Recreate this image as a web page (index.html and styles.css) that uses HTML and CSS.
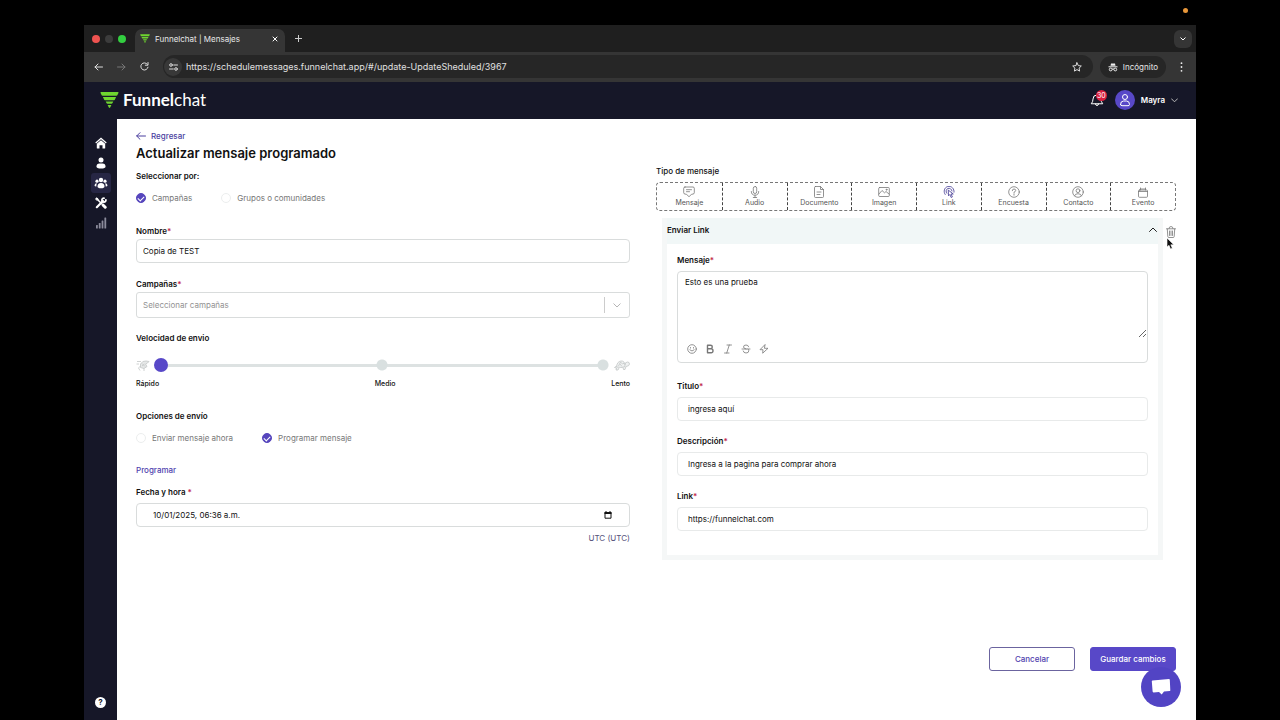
FILE: index.html
```html
<!DOCTYPE html>
<html lang="es">
<head>
<meta charset="utf-8">
<meta name="viewport" content="width=device-width, initial-scale=1">
<title>Funnelchat | Mensajes</title>
<link rel="stylesheet" href="styles.css">
</head>
<body>
<span class="rec-dot"></span>
<div class="browser">
  <div class="tabstrip">
    <div class="lights"><i class="light red"></i><i class="light dim"></i><i class="light green"></i></div>
    <div class="tab">
      <svg width="10" height="9" viewBox="0 0 20 17" fill="#6fd62f"><path d="M1 0h18q1 0 .5 1L18 4H2L.5 1Q0 0 1 0zM3 5.500h14l-1.500 3h-11zM6 10h8l-1.300 2.500H7.300zM8 14h4l-1.500 3h-1z"/></svg>
      <span class="tab-title">Funnelchat | Mensajes</span>
      <button class="plain" aria-label="Cerrar pestaña"><svg width="6" height="6" viewBox="0 0 6 6" class="ln" stroke="#fff"><path d="M1 1l4 4M5 1L1 5"/></svg></button>
    </div>
    <button class="plain newtab" aria-label="Nueva pestaña"><svg width="7" height="7" viewBox="0 0 7 7" class="ln" stroke="#ccc"><path d="M3.500 0v7M0 3.500h7"/></svg></button>
    <button class="tabs-menu" aria-label="Buscar pestañas"><svg width="6" height="4" viewBox="0 0 6 4" class="ln" stroke="#fff"><path d="M.8.800L3 3 5.200.800"/></svg></button>
  </div>
  <div class="toolbar">
    <button class="plain" aria-label="Atrás"><svg width="9" height="8" viewBox="0 0 9 8" class="ln" stroke="#ddd"><path d="M8.500 4H1M4 1L1 4l3 3"/></svg></button>
    <button class="plain" aria-label="Adelante"><svg width="9" height="8" viewBox="0 0 9 8" class="ln" stroke="#777"><path d="M.5 4H8M5 1l3 3-3 3"/></svg></button>
    <button class="plain" aria-label="Recargar"><svg width="9" height="9" viewBox="0 0 9 9" class="ln" stroke="#ddd"><path d="M8 5.200A3.600 3.600 0 1 1 7.300 2.200M8 .5v2.700H5.300"/></svg></button>
    <div class="omnibox">
      <span class="site-info"><svg width="9" height="8" viewBox="0 0 9 8" class="ln" stroke="#ddd"><circle cx="2" cy="2" r="1.300"/><path d="M4.700 2H8.500M.5 6h3.800"/><circle cx="7" cy="6" r="1.300"/></svg></span>
      <input class="url" aria-label="Dirección" value="https://schedulemessages.funnelchat.app/#/update-UpdateSheduled/3967">
      <button class="plain" aria-label="Favorito"><svg width="10" height="10" viewBox="0 0 10 10" class="ln" stroke="#ddd"><path d="M5 .8l1.300 2.800 3 .4-2.200 2.100.5 3L5 7.600 2.400 9.100l.5-3L.7 4l3-.4z"/></svg></button>
    </div>
    <div class="incognito">
      <svg width="10" height="10" viewBox="0 0 10 10" fill="none" stroke="#eee"><path d="M3 1.500h4l.5 2.200h-5z" fill="#eee" stroke="none"/><path d="M.5 4.800h9"/><circle cx="2.700" cy="7.500" r="1.400"/><circle cx="7.300" cy="7.500" r="1.400"/><path d="M4 7.200q1-.6 2 0"/></svg>
      <span>Incógnito</span>
    </div>
    <button class="plain" aria-label="Menú"><svg width="3" height="10" viewBox="0 0 3 10" fill="#eee"><circle cx="1.500" cy="1.200" r=".9"/><circle cx="1.500" cy="5" r=".9"/><circle cx="1.500" cy="8.800" r=".9"/></svg></button>
  </div>

  <header class="app-header">
    <a class="logo" href="#">
      <svg width="19" height="16" viewBox="0 0 20 17" fill="#6fd62f"><path d="M1 0h18q1 0 .5 1L18.300 3.500Q18 4 17.500 4h-15q-.5 0-.8-.5L.5 1Q0 0 1 0zM3 5.300h14l-1.100 2.500q-.4.900-1 .9H5.100q-.6 0-1-.9zM6 10h8l-.8 1.700q-.4.800-1 .8H7.800q-.6 0-1-.8zM8 13.800h4l-1.300 2.700q-.7 1-1.400 0z"/></svg>
      <span><b>Funnel</b>chat</span>
    </a>
    <div class="user">
      <button class="plain bell" aria-label="Notificaciones"><svg width="14" height="14" viewBox="0 0 14 14" class="ln" stroke="#fff"><path d="M1.500 10.500Q3 9 3 6a4 4 0 0 1 8 0q0 3 1.500 4.500zM5.500 11a1.500 1.500 0 0 0 3 0"/></svg><span class="badge">30</span></button>
      <span class="avatar"><svg width="12" height="14" viewBox="0 0 12 14" class="ln" stroke="#fff"><circle cx="6" cy="4" r="2.500"/><path d="M1.500 11.500q0-3.500 3-3.500h3q3 0 3 3.500 0 1.200-1.500 1.200H3q-1.500 0-1.500-1.200z"/></svg></span>
      <button class="plain name">Mayra <svg width="7" height="5" viewBox="0 0 7 5" class="ln" stroke="#bbb"><path d="M.5.800l3 3 3-3"/></svg></button>
    </div>
  </header>

  <div class="app-body">
    <nav class="sidebar">
      <a href="#" aria-label="Inicio"><svg width="12" height="12" viewBox="0 0 12 12" fill="#fff"><path d="M6 .5L.3 5.500l.8.900L6 2.200l4.900 4.200.8-.9z"/><path d="M6 3.200L1.800 6.800V11q0 .5.500.5h2.200V8.200h3v3.300h2.200q.5 0 .5-.5V6.800z"/></svg></a>
      <a href="#" aria-label="Perfil"><svg width="12" height="12" viewBox="0 0 12 12" fill="#fff"><circle cx="6" cy="3" r="2.500"/><path d="M1.500 9.500Q1.500 6.500 4.500 6.500h3q3 0 3 3 0 2-4.500 2t-4.500-2z"/></svg></a>
      <a href="#" class="active" aria-label="Grupos"><svg width="14" height="12" viewBox="0 0 14 12" fill="#fff"><circle cx="7" cy="3" r="2.200"/><circle cx="3" cy="4.200" r="1.600"/><circle cx="11" cy="4.200" r="1.600"/><path d="M3.500 9.500Q3.500 6 7 6t3.500 3.500Q10.500 11.300 7 11.300T3.500 9.500zM.5 8.600Q.5 6.300 3 6.300q-.8 1.200-.7 3.300Q.5 9.500.5 8.600zM13.500 8.600q0-2.300-2.500-2.300.8 1.200.7 3.300 1.800-.1 1.800-1z"/></svg></a>
      <a href="#" aria-label="Herramientas"><svg width="12" height="12" viewBox="0 0 12 12" fill="none" stroke="#fff" stroke-linecap="round"><path d="M1.500 1.500L7 7" stroke-width="1.500"/><path d="M.8 1.800L2 .8l1.300 1.500-.8.800z" fill="#fff"/><path d="M8.200 8.200l2 2" stroke-width="3"/><path d="M1.800 10.200L8 4" stroke-width="2.200"/><path d="M10.900 2.900A2 2 0 1 1 9 1.100" stroke-width="1.800"/></svg></a>
      <a href="#" aria-label="Estadísticas"><svg width="12" height="12" viewBox="0 0 12 12" fill="#8b8b9b"><rect x="1" y="8" width="1.800" height="3.500" rx=".5"/><rect x="3.800" y="6" width="1.800" height="5.500" rx=".5"/><rect x="6.600" y="3.500" width="1.800" height="8" rx=".5"/><rect x="9.400" y=".5" width="1.800" height="11" rx=".5"/></svg></a>
      <a href="#" class="help" aria-label="Ayuda">?</a>
    </nav>

    <main class="page">
      <form class="columns">
        <section class="left">
          <a class="back" href="#"><svg width="10" height="8" viewBox="0 0 10 8" class="ln" stroke="#4a3f9f"><path d="M9.500 4H.7M4 .7L.7 4 4 7.300"/></svg>Regresar</a>
          <h1>Actualizar mensaje programado</h1>
          <h2 class="by">Seleccionar por:</h2>
          <div class="radios">
            <label><input type="radio" name="por" checked>Campañas</label>
            <label><input type="radio" name="por">Grupos o comunidades</label>
          </div>
          <label class="lbl name-lbl" for="nombre">Nombre<em>*</em></label>
          <input class="field" id="nombre" value="Copia de TEST">
          <label class="lbl camp-lbl" for="camp">Campañas<em>*</em></label>
          <div class="select">
            <select id="camp"><option>Seleccionar campañas</option></select>
            <svg width="8" height="5" viewBox="0 0 8 5" class="ln" stroke="#b5b5b5"><path d="M.8.800L4 4 7.200.800"/></svg>
          </div>
          <label class="lbl speed-lbl" for="speed">Velocidad de envio</label>
          <div class="speed">
            <svg width="14" height="13" viewBox="0 0 14 13" fill="#e6e8e8" stroke="#c3c7c7" stroke-width=".8"><path d="M4.500 5q2-3.500 5.500-3l3 .5L11.500 4 9.500 5l1.500 2.500-3 2-3.500-1z"/><path d="M8 9.500V12M4.500 7L2.500 9 4 11.500M1 2.500h4M.5 5h2.500M6 4.500l3 3M6 7l2.500-2" fill="none"/></svg>
            <input type="range" id="speed" min="0" max="2" value="0">
            <svg width="16" height="12" viewBox="0 0 16 12" fill="#f0f2f2" stroke="#c3c7c7" stroke-width=".8"><path d="M2.500 8Q3 2.500 7 2t4 5.500L8 8.500zM11 6q0-3 2.500-3 2 0 2 2T12 7.500l-1 3H9.500l-.5-2M2.500 7L.5 8.500l2 .5-.5 2h2l1-2"/><path d="M4.500 7l2-4 2 2 2-1M6 5l2 2.500" fill="none"/></svg>
          </div>
          <div class="marks"><span>Rápido</span><span>Medio</span><span>Lento</span></div>
          <h2 class="opts">Opciones de envío</h2>
          <div class="radios send">
            <label><input type="radio" name="envio">Enviar mensaje ahora</label>
            <label><input type="radio" name="envio" checked>Programar mensaje</label>
          </div>
          <h3>Programar</h3>
          <label class="lbl" for="fecha">Fecha y hora <em>*</em></label>
          <div class="field date">
            <input id="fecha" value="10/01/2025, 06:36 a.m.">
            <button type="button" class="plain" aria-label="Abrir calendario"><svg width="8" height="8" viewBox="0 0 8 8"><path d="M1 1.500h6v5.700H1z" fill="none" stroke="#111"/><path d="M.5 1h7v2h-7zM1.500 0h1v1h-1zM5.500 0h1v1h-1z" fill="#111"/></svg></button>
          </div>
          <p class="utc">UTC (UTC)</p>
        </section>

        <section class="right">
          <h2 class="type">Tipo de mensaje</h2>
          <div class="types">
            <button type="button"><svg width="12" height="12" viewBox="0 0 12 12" class="ic"><path d="M2 1h8q1.300 0 1.300 1.300v4.400Q11.300 8 10 8L8.300 8.500 6 10.700 3.700 8.500 2 8Q.7 8 .7 6.700V2.300Q.7 1 2 1zM3.500 3.700h5M3.500 5.700h3"/></svg>Mensaje</button>
            <button type="button"><svg width="12" height="12" viewBox="0 0 12 12" class="ic"><rect x="4.300" y=".5" width="3.400" height="7" rx="1.700"/><path d="M2.300 5.500q0 3.700 3.700 3.700t3.700-3.700M6 9.200v2.300M4.300 11.500h3.400"/></svg>Audio</button>
            <button type="button"><svg width="12" height="12" viewBox="0 0 12 12" class="ic"><path d="M2.500.5h5l3 3v7q0 1-1 1h-7q-1 0-1-1v-9q0-1 1-1zM7.500.5v3h3M4 6h4M4 8.500h3"/></svg>Documento</button>
            <button type="button"><svg width="12" height="12" viewBox="0 0 12 12" class="ic"><rect x=".7" y="1.500" width="10.600" height="9" rx="1"/><path d="M1 8L4 4.500l2.500 2.300 1.500-1.300 3 2.500"/><circle cx="8.500" cy="3.700" r=".5"/></svg>Imagen</button>
            <button type="button"><svg width="12" height="12" viewBox="0 0 12 12" class="ic on"><path d="M2.200 8.500A5 5 0 1 1 11 6.200M3.700 7.200A3 3 0 1 1 9 5M5.300 4.500L5.500 9.800 6.800 8.500l1.400 3 1.200-.6L8 8h1.900z"/></svg>Link</button>
            <button type="button"><svg width="12" height="12" viewBox="0 0 12 12" class="ic"><circle cx="6" cy="6" r="5.300"/><path d="M4.300 4.700Q4.300 3 6 3t1.700 1.500Q7.700 5.600 6 6.200v1M6 8.300v.9"/></svg>Encuesta</button>
            <button type="button"><svg width="12" height="12" viewBox="0 0 12 12" class="ic"><circle cx="6" cy="6" r="5.300"/><circle cx="6" cy="4.700" r="1.900"/><path d="M2.500 9.800Q3 7.700 6 7.700t3.500 2.100"/></svg>Contacto</button>
            <button type="button"><svg width="12" height="12" viewBox="0 0 12 12" class="ic"><rect x="1.500" y="4" width="9" height="7.300" rx="1"/><path d="M1.500 5.500h9M3.500 2v2M8.500 2v2M3.500 3h5"/></svg>Evento</button>
          </div>
          <div class="card-row">
            <div class="card">
              <div class="card-head"><span>Enviar Link</span><button type="button" class="plain" aria-label="Contraer"><svg width="8" height="5" viewBox="0 0 8 5" class="ln" stroke="#222"><path d="M.5 4.500L4 1l3.500 3.500"/></svg></button></div>
              <div class="card-body">
                <label class="lbl" for="msg">Mensaje<em>*</em></label>
                <div class="editor">
                  <textarea id="msg">Esto es una prueba</textarea>
                  <div class="tools">
                    <button type="button" class="plain" aria-label="Emoji"><svg width="10" height="10" viewBox="0 0 10 10" class="ic"><circle cx="5" cy="5" r="4.300"/><path d="M2.800 5.900Q5 8.300 7.200 5.900M3.500 3.500v.6M6.500 3.500v.6"/></svg></button>
                    <button type="button" class="plain" aria-label="Negrita"><svg width="10" height="10" viewBox="0 0 10 10" class="ic bold"><path d="M2.500 1.300h3Q7.300 1.300 7.300 3T5.500 4.800h-3zM2.500 4.800H6q2 0 2 2T6 8.700H2.500z"/></svg></button>
                    <button type="button" class="plain" aria-label="Cursiva"><svg width="10" height="10" viewBox="0 0 10 10" class="ic"><path d="M4 1h4.500M1.500 9H6M6.300 1L3.700 9"/></svg></button>
                    <button type="button" class="plain" aria-label="Tachado"><svg width="10" height="10" viewBox="0 0 10 10" class="ic"><path d="M7.700 2.800Q7.300 1 5 1 2.500 1 2.500 3q0 1.300 2.500 2M1 5h8M2.200 7Q2.500 9 5 9q2.800 0 2.800-2.200 0-1.200-.8-1.800"/></svg></button>
                    <button type="button" class="plain" aria-label="Variables"><svg width="10" height="10" viewBox="0 0 10 10" class="ic"><path d="M5.800.8L1 5.700h3L3.700 9.200 9 4.300H5.800z"/></svg></button>
                  </div>
                </div>
                <label class="lbl after-editor" for="titulo">Titulo<em>*</em></label>
                <input class="field in" id="titulo" value="ingresa aquí">
                <label class="lbl next" for="desc">Descripción<em>*</em></label>
                <input class="field in" id="desc" value="Ingresa a la pagina para comprar ahora">
                <label class="lbl next" for="link">Link<em>*</em></label>
                <input class="field in" id="link" value="https://funnelchat.com">
              </div>
            </div>
            <button type="button" class="plain trash" aria-label="Eliminar">
              <svg width="10" height="12" viewBox="0 0 10 12" class="ic"><path d="M.5 2.800h9M3 2.500q0-2 2-2t2 2M1.300 3l.5 7.500q.1 1 1.100 1h4.200q1 0 1.100-1L8.700 3M3.500 5v4.500M5 5v4.500M6.500 5v4.500"/></svg>
              <svg class="cursor" width="9" height="13" viewBox="0 0 9 13" fill="#111" stroke="#fff" stroke-width=".6"><path d="M1 1v9l2-1.700L4.500 12l1.800-.8-1.500-3.400h3z"/></svg>
            </button>
          </div>
        </section>
      </form>
      <footer class="actions">
        <button class="btn outline">Cancelar</button>
        <button class="btn solid">Guardar cambios</button>
      </footer>
      <button class="chat" aria-label="Chat"><svg width="20" height="18" viewBox="0 0 20 18" fill="#fff"><path d="M1.500 2.500L18 1q.7 0 .8.700l.5 10.500q0 .8-.7.900l-5.600.4-2.300 3-2.700-2.500-5.500.4q-.8 0-.9-.8L.8 3.300q0-.7.700-.8z"/></svg></button>
    </main>
  </div>
</div>
</body>
</html>
```

FILE: styles.css
```css
* { box-sizing: border-box; }
body {
  margin: 0;
  background: #000;
  color: #111;
  font: 8px/12px Inter, sans-serif;
}
button, input, select, textarea { font: inherit; color: inherit; margin: 0; }
button { cursor: pointer; }
a { text-decoration: none; color: inherit; }
h1, h2, h3, p { margin: 0; }
svg { display: block; flex: none; }
em { color: #c2274b; font-style: normal; }
.ln { fill: none; stroke-linecap: round; stroke-linejoin: round; }
.ic { fill: none; stroke: #777; stroke-width: .8; stroke-linecap: round; stroke-linejoin: round; }
.ic.on { stroke: #3f3591; }
.ic.bold { stroke-width: 1.400; }
.plain {
  border: 0;
  padding: 0;
  background: none;
  display: flex;
  align-items: center;
}
.rec-dot {
  position: absolute;
  top: 8px;
  right: 92px;
  width: 5px;
  height: 5px;
  border-radius: 50%;
  background: #e8973a;
}
.browser {
  min-height: 100vh;
  padding: 25px 84px 0;
  display: flex;
  flex-direction: column;
}

/* browser chrome */
.tabstrip {
  height: 27px;
  background: linear-gradient(#1f1f1f 0 0);
  display: flex;
  align-items: center;
  padding: 0 4px 0 8px;
}
.lights { display: flex; gap: 5px; width: 43px; }
.light { width: 8px; height: 8px; border-radius: 50%; }
.red { background: #ee5350; }
.dim { background: #3c3c3c; }
.green { background: #33ce40; }
.tab {
  align-self: flex-end;
  width: 150px;
  height: 23px;
  padding: 0 7px 4px 5px;
  border-radius: 7px 7px 0 0;
  background: #353535;
  color: #e8e8e8;
  display: flex;
  align-items: center;
  gap: 5px;
}
.tab-title { flex: 1; }
.newtab { margin-left: 10px; }
.tabs-menu {
  margin-left: auto;
  width: 18px;
  height: 18px;
  border: 0;
  border-radius: 6px;
  background: #353535;
  display: grid;
  place-items: center;
}
.toolbar {
  height: 30px;
  background: #353535;
  display: flex;
  align-items: center;
  gap: 14px;
  padding: 0 13px 1px 10px;
}
.omnibox {
  flex: 1;
  height: 23px;
  border-radius: 12px;
  background: #262626;
  display: flex;
  align-items: center;
  gap: 4px;
  padding: 0 11px 0 1px;
}
.site-info {
  width: 18px;
  height: 18px;
  border-radius: 50%;
  background: #383838;
  display: grid;
  place-items: center;
}
.url {
  flex: 1;
  border: 0;
  padding: 0;
  background: none;
  color: #e0e0e0;
  font-size: 9px;
  outline: 0;
}
.incognito {
  height: 22px;
  margin-left: -7px;
  padding: 0 8px;
  border-radius: 11px;
  background: #262626;
  color: #e8e8e8;
  display: flex;
  align-items: center;
  gap: 5px;
}

/* app shell */
.app-header {
  height: 37px;
  background: #161728;
  color: #fff;
  display: flex;
  align-items: center;
  justify-content: space-between;
  padding: 0 18px 1px 16px;
}
.logo {
  display: flex;
  align-items: center;
  gap: 4px;
  font: 17px/20px Lato, sans-serif;
}
.user { display: flex; align-items: center; gap: 6px; }
.bell { position: relative; margin-right: 5px; }
.badge {
  position: absolute;
  top: -3px;
  right: -3px;
  width: 11px;
  height: 11px;
  border-radius: 50%;
  background: #d8203e;
  color: #fff;
  font-size: 7px;
  line-height: 11px;
  text-align: center;
}
.avatar {
  width: 20px;
  height: 20px;
  border-radius: 50%;
  background: #5848c8;
  display: grid;
  place-items: center;
}
.name { gap: 6px; font-weight: 600; }
.app-body { flex: 1; display: flex; background: #161728; }
.sidebar {
  width: 33px;
  padding: 14px 0 9px;
  display: flex;
  flex-direction: column;
  align-items: center;
}
.sidebar a {
  width: 20px;
  height: 20px;
  border-radius: 3px;
  display: grid;
  place-items: center;
}
.sidebar .active { background: #262644; }
.sidebar .help {
  width: 11px;
  height: 11px;
  margin-top: auto;
  margin-bottom: 3px;
  border-radius: 50%;
  background: #fff;
  color: #161728;
  font-weight: 700;
  line-height: 11px;
}
.page {
  position: relative;
  flex: 1;
  min-width: 0;
  background: #fff;
  padding: 11px 20px 49px 19px;
  display: flex;
  flex-direction: column;
}
.columns {
  display: grid;
  grid-template-columns: 19fr 20fr;
  gap: 26px;
}
.left, .right { display: flex; flex-direction: column; min-width: 0; }

/* left form */
.back {
  display: flex;
  align-items: center;
  gap: 5px;
  color: #4a3f9f;
  font-weight: 500;
}
h1 { font-size: 13px; line-height: 22px; font-weight: 600; margin-bottom: 6px; }
h2, .lbl { font-size: 8px; line-height: 12px; font-weight: 600; }
h3 { font-size: 8px; line-height: 12px; font-weight: 500; color: #4f41ae; margin: 20px 0 10px; }
.radios { display: flex; gap: 29px; margin-top: 10px; color: #777; }
.radios label { display: flex; align-items: center; gap: 6px; }
.radios input {
  appearance: none;
  width: 10px;
  height: 10px;
  border: 1px solid #eceeee;
  border-radius: 50%;
}
.radios input:checked {
  border-color: #5646bd;
  background: #5646bd;
  display: grid;
  place-items: center;
}
.radios input:checked::after {
  content: "";
  width: 5px;
  height: 3px;
  border: solid #fff;
  border-width: 0 0 1px 1px;
  transform: rotate(-45deg);
}
.name-lbl { margin-top: 21px; }
.field {
  height: 24px;
  width: 100%;
  margin-top: 2px;
  padding: 0 6px;
  border: 1px solid #d9dcdc;
  border-radius: 4px;
  background: #fff;
}
.camp-lbl { margin-top: 15px; }
.select {
  height: 26px;
  margin-top: 2px;
  border: 1px solid #d9dcdc;
  border-radius: 3px;
  display: flex;
  align-items: center;
}
.select select {
  appearance: none;
  flex: 1;
  height: 16px;
  padding: 0 6px;
  border: 0;
  border-right: 1px solid #ccc;
  background: none;
  color: #929292;
}
.select svg { margin: 0 8px; }
.speed-lbl { margin-top: 14px; }
.speed { display: flex; align-items: center; gap: 4px; margin-top: 14px; }
.speed input {
  appearance: none;
  flex: 1;
  min-width: 0;
  height: 14px;
  background:
    radial-gradient(circle at center, #d9e0e0 5px, transparent 6px),
    radial-gradient(circle at calc(100% - 7px) center, #d9e0e0 5px, transparent 6px),
    linear-gradient(#dde2e2 0 0) center / calc(100% - 14px) 3px no-repeat;
}
.speed input::-webkit-slider-thumb {
  appearance: none;
  width: 14px;
  height: 14px;
  border-radius: 50%;
  background: #5848c8;
}
.marks {
  display: flex;
  justify-content: space-between;
  margin-top: 6px;
  font-size: 7px;
  font-weight: 500;
}
.opts { margin-top: 20px; }
.date { display: flex; align-items: center; margin-top: 5px; padding: 0 17px 0 16px; }
.date input { flex: 1; border: 0; padding: 0; background: none; outline: 0; }
.utc { margin-top: 5px; text-align: right; color: #55517a; }

/* right panel */
.right { padding-top: 35px; }
.type { font-weight: 500; }
.types {
  display: grid;
  grid-template-columns: repeat(8, minmax(0, 1fr));
  margin-top: 5px;
  border: 1px dashed #777;
  border-radius: 4px;
}
.types button {
  height: 27px;
  padding: 0;
  border: 0;
  border-left: 1px dashed #444;
  background: none;
  color: #555;
  font-size: 7px;
  line-height: 10px;
  display: flex;
  flex-direction: column;
  align-items: center;
  justify-content: center;
}
.types button:first-child { border-left: 0; }
.card-row { display: flex; align-items: flex-start; margin: 7px 0 0 6px; }
.card { flex: 1; min-width: 0; border: solid #f5f7f7; border-width: 0 5px 5px; }
.card-head {
  height: 26px;
  padding: 0 1px 3px 0;
  background: #f1f7f7;
  display: flex;
  align-items: center;
  justify-content: space-between;
  font-weight: 600;
}
.card-body { padding: 10px 10px 24px; }
.card-body .lbl { display: block; }
.editor { margin-top: 5px; border: 1px solid #d9dcdc; border-radius: 4px; }
.editor textarea {
  display: block;
  width: 100%;
  height: 66px;
  padding: 4px 7px;
  border: 0;
  background: none;
  resize: vertical;
  outline: 0;
}
.tools { display: flex; gap: 8px; padding: 6px 9px 8px; }
.after-editor { margin-top: 17px; }
.next { margin-top: 14px; }
.in { margin-top: 5px; padding: 0 10px; border-color: #e8eaea; }
.trash { position: relative; margin: 8px 0 0 3px; }
.cursor { position: absolute; left: 0; top: 11px; }

/* actions */
.actions { display: flex; justify-content: flex-end; gap: 15px; margin-top: auto; }
.btn {
  width: 86px;
  height: 24px;
  padding: 0;
  border: 1px solid #5848c8;
  border-radius: 3px;
  font-weight: 500;
}
.outline { background: #fff; color: #5041ae; border-color: #6b649f; }
.solid { background: #5848c8; color: #fff; }
.chat {
  position: absolute;
  right: 15px;
  bottom: 13px;
  width: 40px;
  height: 40px;
  padding: 0;
  border: 0;
  border-radius: 50%;
  background: #5244c4;
  display: grid;
  place-items: center;
}
```
